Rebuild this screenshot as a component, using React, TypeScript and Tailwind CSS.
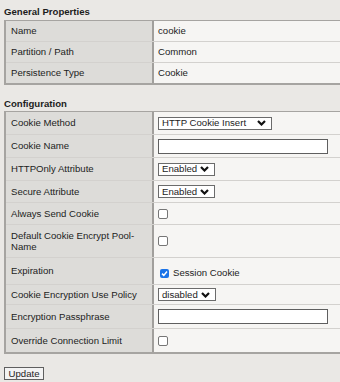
import type { ReactNode } from "react";

function Chevron() {
	return (
		<svg width="9" height="6" viewBox="0 0 9 6" className="shrink-0">
			<polyline points="1,1 4.5,4.5 8,1" fill="none" stroke="#111" strokeWidth="2.2" />
		</svg>
	);
}

function Select({ value, width }: { value: string; width: string }) {
	return (
		<div className={`flex items-center justify-between h-[13px] ${width} border border-[#6b6b6b] bg-white pl-[3px] pr-[5px] leading-none`}>
			<span>{value}</span>
			<Chevron />
		</div>
	);
}

function TextInput() {
	return <div className="h-[15px] w-[170px] border border-[#5f5f5f] bg-white" />;
}

function Checkbox({ checked = false }: { checked?: boolean }) {
	if (checked) {
		return (
			<div className="w-[9px] h-[9px] rounded-[2px] bg-[#1a73e8] flex items-center justify-center">
				<svg width="7" height="7" viewBox="0 0 7 7">
					<polyline points="1,3.6 2.8,5.4 6,1.5" fill="none" stroke="#fff" strokeWidth="1.5" />
				</svg>
			</div>
		);
	}
	return <div className="w-[10px] h-[10px] rounded-[2px] border border-[#767676] bg-white" />;
}

function Row({ label, height, children, last = false }: { label: ReactNode; height: string; children?: ReactNode; last?: boolean }) {
	return (
		<div className={`flex ${height} ${last ? "" : "border-b border-[#d3d1ce]"}`}>
			<div className="w-[148px] shrink-0 bg-[#dddcd9] border-r-2 border-[#a19f9c] pl-[5px] pr-[4px] flex items-center leading-[11.5px]">
				{label}
			</div>
			<div className="flex-1 bg-[#f6f5f3] pl-[4px] flex items-center">{children}</div>
		</div>
	);
}

export default function App() {
	return (
		<div className="w-[340px] h-[382px] overflow-hidden bg-[#eae8e5] font-['Liberation_Sans',Arial,sans-serif] text-[9.6px] text-[#1c1c1c]">
			<div className="h-[20px] pt-[6px] pl-[4px] font-bold leading-[11.5px]">General Properties</div>
			<section className="ml-[4px] w-[400px] border-t border-l-2 border-b-2 border-[#a6a4a1]">
				<Row label="Name" height="h-[21px]">cookie</Row>
				<Row label="Partition / Path" height="h-[21px]">Common</Row>
				<Row label="Persistence Type" height="h-[20px]" last>Cookie</Row>
			</section>

			<div className="h-[26px] pt-[13px] pl-[4px] font-bold leading-[11.5px]">Configuration</div>
			<section className="ml-[4px] w-[400px] border-t border-l-2 border-b-2 border-[#a6a4a1]">
				<Row label="Cookie Method" height="h-[23px]">
					<Select value="HTTP Cookie Insert" width="w-[114px]" />
				</Row>
				<Row label="Cookie Name" height="h-[23px]">
					<TextInput />
				</Row>
				<Row label="HTTPOnly Attribute" height="h-[23px]">
					<Select value="Enabled" width="w-[57px]" />
				</Row>
				<Row label="Secure Attribute" height="h-[22px]">
					<Select value="Enabled" width="w-[57px]" />
				</Row>
				<Row label="Always Send Cookie" height="h-[22px]">
					<Checkbox />
				</Row>
				<Row label="Default Cookie Encrypt Pool-Name" height="h-[33px]">
					<Checkbox />
				</Row>
				<Row label="Expiration" height="h-[27px]">
					<div className="flex items-center gap-[4px] pl-[2px] pt-[5px]">
						<Checkbox checked />
						<span>Session Cookie</span>
					</div>
				</Row>
				<Row label="Cookie Encryption Use Policy" height="h-[20px]">
					<Select value="disabled" width="w-[58px]" />
				</Row>
				<Row label="Encryption Passphrase" height="h-[24px]">
					<TextInput />
				</Row>
				<Row label="Override Connection Limit" height="h-[23px]" last>
					<Checkbox />
				</Row>
			</section>

			<div className="pt-[13px] pl-[4px]">
				<button className="h-[13px] w-[40px] border border-[#5f5f5f] bg-[#f3f3f3] leading-none text-[9.6px]">Update</button>
			</div>
		</div>
	);
}
